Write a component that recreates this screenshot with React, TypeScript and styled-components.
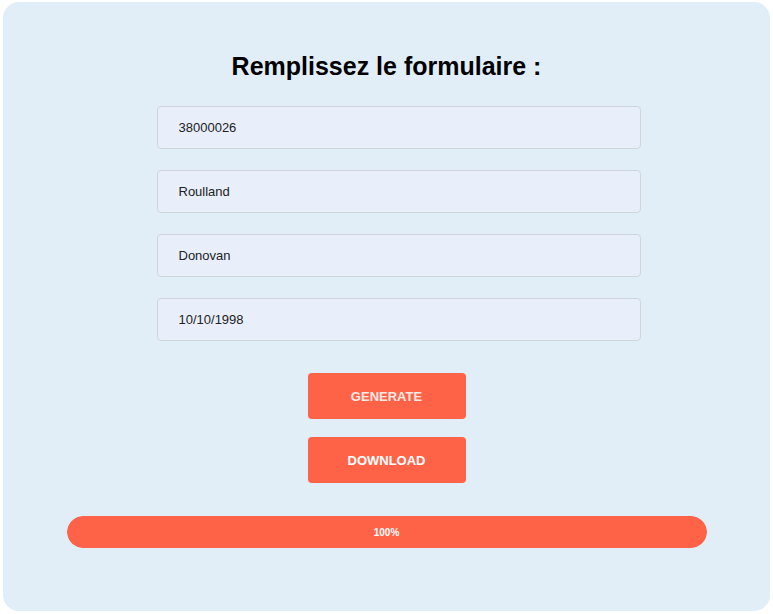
import React from "react";
import styled, { createGlobalStyle } from "styled-components";

const Global = createGlobalStyle`
  html, body { margin: 0; padding: 0; background: #ffffff; }
  body { font-family: "Liberation Sans", Arial, sans-serif; }
  * { box-sizing: border-box; }
`;

const Page = styled.div`
  padding: 2px 3px 3px 3px;
`;

const Card = styled.div`
  height: 609px;
  background: #e1eef8;
  border-radius: 16px;
  padding-top: 49px;
  display: flex;
  flex-direction: column;
  align-items: center;
`;

const Title = styled.h1`
  margin: 0;
  font-size: 25px;
  line-height: 30px;
  font-weight: 700;
  color: #000;
`;

const Form = styled.form`
  width: 484px;
  margin: 25px 0 0 24px;
  display: flex;
  flex-direction: column;
  gap: 21px;
`;

const Input = styled.input`
  width: 100%;
  height: 43px;
  padding: 0 21px;
  background: #e8effb;
  border: 1px solid #cfd4da;
  border-radius: 4px;
  font-family: "Liberation Sans", Arial, sans-serif;
  font-size: 13px;
  color: #222;
  outline: none;
`;

const Buttons = styled.div`
  margin-top: 32px;
  display: flex;
  flex-direction: column;
  gap: 18px;
`;

const Button = styled.button<{ $dim?: boolean }>`
  width: 158px;
  height: 46px;
  border: none;
  border-radius: 4px;
  background: #ff6347;
  color: ${(p) => (p.$dim ? "#fbe9e6" : "#ffffff")};
  font-family: "Liberation Sans", Arial, sans-serif;
  font-weight: 700;
  font-size: 13px;
  cursor: pointer;
`;

const Track = styled.div`
  margin-top: 33px;
  width: 640px;
  height: 32px;
  border-radius: 16px;
  background: #e1eef8;
  overflow: hidden;
`;

const Fill = styled.div`
  height: 100%;
  border-radius: 16px;
  background: #ff6347;
  color: #fff;
  font-size: 10px;
  font-weight: 700;
  display: flex;
  align-items: center;
  justify-content: center;
`;

export default function App() {
  const progress = 100;
  return (
    <Page>
      <Global />
      <Card>
        <Title>Remplissez le formulaire :</Title>
        <Form onSubmit={(e) => e.preventDefault()}>
          <Input defaultValue="38000026" />
          <Input defaultValue="Roulland" />
          <Input defaultValue="Donovan" />
          <Input defaultValue="10/10/1998" />
        </Form>
        <Buttons>
          <Button $dim>GENERATE</Button>
          <Button>DOWNLOAD</Button>
        </Buttons>
        <Track>
          <Fill style={{ width: `${progress}%` }}>{progress}%</Fill>
        </Track>
      </Card>
    </Page>
  );
}
